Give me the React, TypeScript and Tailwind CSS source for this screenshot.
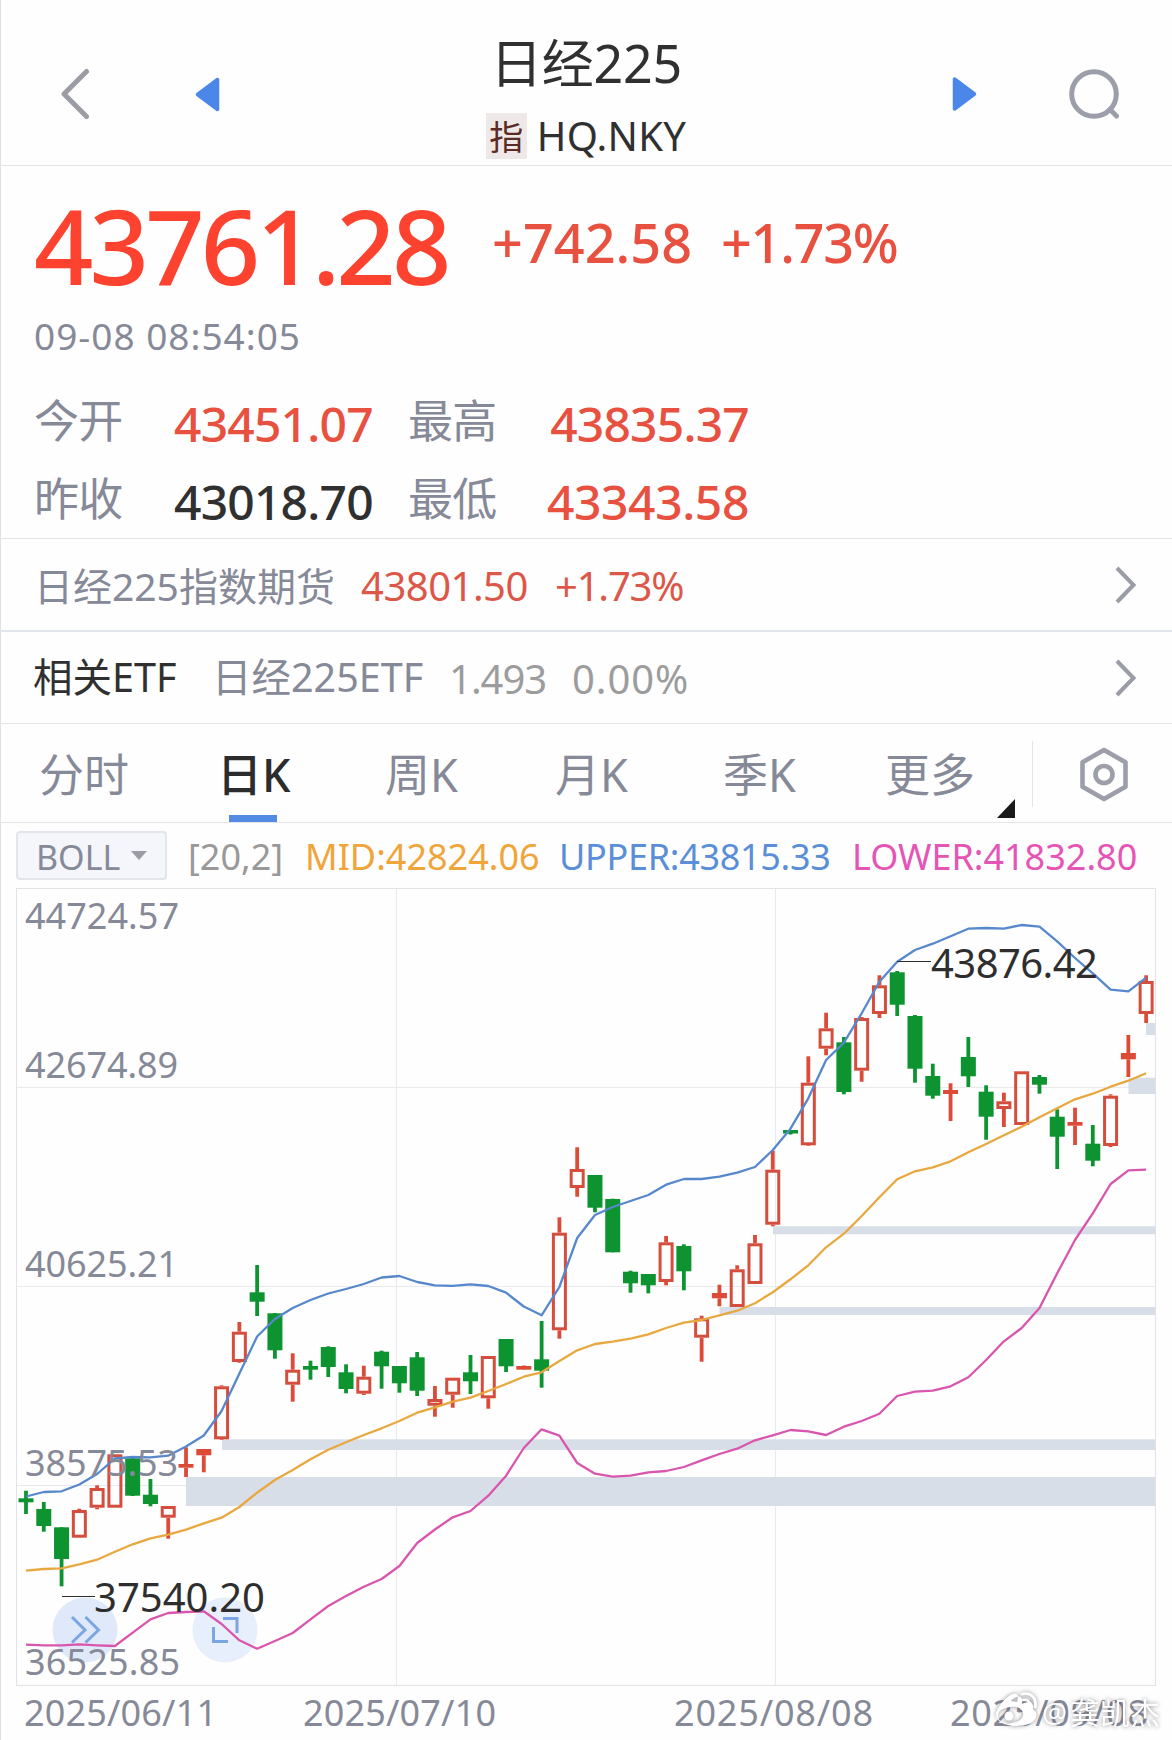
import clsx from "clsx";

type Candle = [high: number, top: number, bottom: number, low: number, up: 0 | 1];

const STEP = 17.78;
const FIRST_X = 26;
const TOP = 888;
const BOTTOM = 1685;

const candles: Candle[] = [
  [1490.7, 1498.3, 1502.3, 1514, 0],
  [1502, 1509, 1526, 1531.7, 0],
  [1527.3, 1527.3, 1559, 1586.3, 0],
  [1508.7, 1510, 1537.7, 1538, 1],
  [1485.3, 1488, 1507.7, 1509.3, 1],
  [1454.3, 1454.3, 1507.7, 1507.7, 1],
  [1457.3, 1458.3, 1495.7, 1496, 0],
  [1479, 1494.7, 1504, 1506.3, 0],
  [1506, 1506, 1517.7, 1538.7, 1],
  [1447.3, 1464, 1467.7, 1477, 1],
  [1449, 1449, 1455.3, 1472.3, 1],
  [1385.3, 1386.3, 1439.3, 1440, 1],
  [1322, 1331.7, 1362, 1362.7, 1],
  [1265, 1292.3, 1301.7, 1316, 0],
  [1313, 1313.3, 1350.3, 1358.7, 0],
  [1353.3, 1369.7, 1384.7, 1401.7, 1],
  [1360.7, 1366, 1369.7, 1379.7, 0],
  [1346.3, 1347, 1367, 1377, 0],
  [1364.3, 1372.3, 1389, 1393.3, 0],
  [1365.7, 1376.7, 1393.7, 1395, 1],
  [1350.7, 1351.7, 1366.3, 1388.7, 0],
  [1366, 1366, 1383.3, 1392.7, 0],
  [1352, 1357.3, 1390.7, 1396, 0],
  [1386, 1399, 1405.7, 1416.7, 1],
  [1377.7, 1377.7, 1394.7, 1407.7, 1],
  [1355, 1372.3, 1381.3, 1394, 0],
  [1356, 1356, 1398.3, 1408.7, 1],
  [1339, 1339, 1366.3, 1372, 0],
  [1365.5, 1366, 1369.7, 1370, 1],
  [1321, 1359.3, 1370.7, 1387.7, 0],
  [1217.3, 1232.7, 1330.3, 1338.7, 1],
  [1147.3, 1169, 1188, 1196.7, 1],
  [1175, 1175, 1207.7, 1212.3, 0],
  [1198.7, 1199, 1252.3, 1252.3, 0],
  [1270.7, 1271.7, 1283.3, 1292.7, 0],
  [1274, 1274, 1285.3, 1293.3, 0],
  [1236, 1242.3, 1282, 1285.3, 1],
  [1244.3, 1246, 1271.3, 1290.3, 0],
  [1315.7, 1318.3, 1337.7, 1361.7, 1],
  [1284.7, 1293, 1298.3, 1306.3, 1],
  [1265.3, 1269.3, 1307, 1307, 1],
  [1235, 1243.3, 1284, 1284, 1],
  [1150.7, 1169.7, 1224.7, 1226.3, 1],
  [1130, 1130, 1133.5, 1134.5, 0],
  [1056.3, 1082.7, 1145.3, 1146, 1],
  [1012.7, 1028.3, 1048.7, 1055.3, 1],
  [1037, 1042.3, 1092, 1094.3, 0],
  [1017, 1018, 1070.7, 1081.7, 1],
  [975.3, 985.3, 1014, 1018, 1],
  [971, 972.3, 1004.7, 1016, 0],
  [1015, 1016, 1068.7, 1082.7, 0],
  [1063.7, 1076, 1095.7, 1098.7, 0],
  [1083.3, 1090, 1094, 1121, 1],
  [1037, 1057, 1076.3, 1087, 0],
  [1085.3, 1091.7, 1116.7, 1139.7, 0],
  [1092.7, 1101.3, 1109, 1127, 1],
  [1071.3, 1071.3, 1125, 1125, 1],
  [1075, 1077, 1084.7, 1093.7, 0],
  [1109.3, 1116.7, 1136.7, 1169, 0],
  [1107.7, 1122, 1125.7, 1145, 1],
  [1125, 1143.7, 1160.7, 1166.3, 0],
  [1094.3, 1095.7, 1146, 1147, 1],
  [1035, 1053, 1059.3, 1077, 1],
  [975.3, 981, 1014, 1023, 1],
];

const upper = [
  1496.5, 1492, 1491.3, 1484.5, 1474, 1458.5, 1457, 1457.3, 1455.7, 1446.5, 1435.5, 1411, 1373.5,
  1336.5, 1319, 1308, 1300, 1293.5, 1289, 1284, 1277.5, 1276, 1282, 1285.3, 1285.8, 1284.3, 1286,
  1292.7, 1306.5, 1315.3, 1287, 1238, 1215, 1207, 1201, 1195, 1184.7, 1179, 1179, 1176.7, 1172.7,
  1167, 1150, 1128.7, 1098.3, 1060, 1042.7, 1013.3, 981.7, 961.7, 950, 943.7, 936.3, 928.7, 928,
  928.7, 925, 926.7, 941.3, 958, 973.3, 989.7, 991.3, 977.7,
];

const mid = [
  1570.7, 1569, 1568.3, 1564.3, 1559.7, 1551.7, 1544.3, 1538.3, 1534.7, 1529.7, 1523.3, 1517.7,
  1507, 1492.7, 1480, 1470, 1459.3, 1449.7, 1442.3, 1435, 1428.3, 1421, 1412.7, 1407.3, 1401.7,
  1397.7, 1391, 1384, 1376.7, 1372.3, 1361, 1350.3, 1344, 1341.7, 1338.7, 1334.3, 1328, 1322.7,
  1320, 1315.3, 1310.7, 1303.3, 1292.3, 1279.3, 1265.3, 1247.3, 1233.7, 1216, 1197.3, 1179.3,
  1171.3, 1167.3, 1161.3, 1152.3, 1144, 1135.3, 1126.7, 1117.3, 1108.3, 1099.3, 1093.7, 1086.7,
  1080.7, 1073.3,
];

const lower = [
  1644.7, 1645.3, 1645.3, 1644.3, 1645.3, 1646, 1632.7, 1619.3, 1613, 1612, 1611.3, 1624, 1640.3,
  1648.7, 1641, 1633, 1619.3, 1606, 1596, 1586.7, 1579, 1566, 1543, 1529.5, 1517.3, 1511, 1495.7,
  1475.7, 1448, 1429.3, 1435.7, 1463, 1473.7, 1476.7, 1475.7, 1472.3, 1471, 1467, 1460.3, 1454,
  1448.7, 1440.3, 1435.3, 1430, 1431.3, 1435, 1426.7, 1421, 1413.7, 1396, 1391.7, 1390.7, 1386.3,
  1377.3, 1360, 1341.3, 1328, 1308, 1273.3, 1240, 1213.3, 1184, 1170.3, 1169.7,
];

// unfilled gaps: x start, top, bottom
const gaps = [
  [186, 1477, 1506],
  [222, 1439.3, 1450],
  [719.5, 1307, 1315],
  [773, 1226.3, 1234.3],
  [1128.5, 1077.7, 1094],
  [1146, 1023, 1035],
];

const axisLabels = [
  { text: "44724.57", y: 929, w: 154 },
  { text: "42674.89", y: 1078, w: 153 },
  { text: "40625.21", y: 1277, w: 153 },
  { text: "38575.53", y: 1476, w: 153 },
  { text: "36525.85", y: 1675, w: 155 },
];

const dates = [
  { text: "2025/06/11", x: 24, w: 193 },
  { text: "2025/07/10", x: 303, w: 193 },
  { text: "2025/08/08", x: 674, w: 199 },
  { text: "2025/09/08", x: 950, w: 198 },
];

const tabs = [
  { label: "分时", pos: "ml-[39px] w-[91px]" },
  { label: "日K", pos: "ml-[87px] w-[76px]" },
  { label: "周K", pos: "ml-[92px] w-[77px]" },
  { label: "月K", pos: "ml-[93px] w-[77px]" },
  { label: "季K", pos: "ml-[91px] w-[77px]" },
  { label: "更多", pos: "ml-[85px] w-[91px]" },
];

const cx = (i: number) => FIRST_X + i * STEP;
const points = (ys: number[]) => ys.map((y, i) => `${cx(i).toFixed(1)},${y}`).join(" ");

function Chevron() {
  return (
    <svg className="ml-auto mr-[34px]" width="24" height="38" viewBox="0 0 24 38" fill="none">
      <path d="M3 2 19.500 19 3 36" stroke="#9a9ca6" strokeWidth="4" />
    </svg>
  );
}

function Header() {
  return (
    <header className="flex h-[166px] items-center border-b border-[#e4e5e8]">
      <svg className="ml-[60px] mt-[22px]" width="30" height="52" viewBox="0 0 30 52" fill="none">
        <path d="M26.500 3.500 4 26 26.500 48.500" stroke="#9b9ca4" strokeWidth="5" strokeLinecap="round" strokeLinejoin="round" />
      </svg>
      <svg className="ml-[105px] mt-[22px]" width="26" height="36" viewBox="0 0 26 36">
        <path d="M2.500 18.500 22.500 3.500V33.500Z" fill="#4a87e8" stroke="#4a87e8" strokeWidth="3.500" strokeLinejoin="round" />
      </svg>
      <div className="flex h-full flex-1 flex-col items-center">
        <h1 className="mt-[35px] text-[52px] leading-[56px] tracking-[-0.3px] text-[#303030]">日经225</h1>
        <div className="mt-[22px] flex h-[46px] items-center gap-[10px]">
          <span className="flex h-[46px] w-[41px] items-center justify-center bg-[#eee9e8] pt-[2px] text-[34px] leading-none text-[#5b2b25]">
            指
          </span>
          <span className="text-[40px] leading-none tracking-[0.3px] text-[#303030]">HQ.NKY</span>
        </div>
      </div>
      <svg className="mt-[22px]" width="26" height="36" viewBox="0 0 26 36">
        <path d="M23.500 18 3.500 3V33Z" fill="#4a87e8" stroke="#4a87e8" strokeWidth="3.500" strokeLinejoin="round" />
      </svg>
      <svg className="ml-[91px] mr-[52px] mt-[22px]" width="52" height="52" viewBox="0 0 52 52" fill="none" stroke="#9c9eaa" strokeWidth="5">
        <circle cx="26" cy="26" r="22.300" />
        <path d="m42 41.500 6.500 6.500" strokeLinecap="round" />
      </svg>
    </header>
  );
}

function Quote() {
  return (
    <section className="h-[373px] border-b border-[#e4e5e8] pl-[34px]">
      <div className="flex h-[142px] pt-[27px] font-medium">
        <span className="w-[458px] text-[104px] leading-[104px] tracking-[-3.900px] text-[#fd4330]">43761.28</span>
        <span className="w-[229px] pt-[22px] text-[54px] leading-[54px] text-[#e8503f]">+742.58</span>
        <span className="pt-[22px] text-[54px] leading-[54px] tracking-[-1.300px] text-[#e8503f]">+1.73%</span>
      </div>
      <div className="mt-[8px] text-[37px] leading-[40px] tracking-[1px] text-[#868997]">09-08 08:54:05</div>
      <div className="mt-[26px] grid w-[715px] grid-cols-[140px_234px_100px_1fr] text-[48px] leading-[78px] tracking-[-0.8px] text-[#e8503f]">
        <span className="text-[45px] text-[#868997]">今开</span>
        <span className="pt-[3px] font-medium">43451.07</span>
        <span className="text-[45px] text-[#868997]">最高</span>
        <span className="pt-[3px] text-right font-medium">43835.37</span>
        <span className="-mt-[3px] text-[45px] text-[#868997]">昨收</span>
        <span className="font-medium text-[#303030]">43018.70</span>
        <span className="-mt-[3px] text-[45px] text-[#868997]">最低</span>
        <span className="text-right font-medium tracking-[-0.4px]">43343.58</span>
      </div>
    </section>
  );
}

function Tabs() {
  return (
    <nav className="flex h-[99px] items-stretch border-b border-[#e4e5e8]">
      {tabs.map((t) => {
        const active = t.label === "日K";
        return (
          <div
            key={t.label}
            className={clsx(
              "relative flex items-center whitespace-nowrap pt-[3px] text-[45px] leading-none",
              t.pos,
              active ? "font-medium text-[#2c2c2c]" : "text-[#868997]"
            )}
          >
            {t.label}
            {active && <span className="absolute bottom-0 left-[12px] h-[7px] w-[48px] bg-[#548be2]" />}
          </div>
        );
      })}
      <svg className="mb-[4px] ml-[21px] self-end" width="18" height="19" viewBox="0 0 18 19">
        <path d="M18 0V19H0Z" fill="#1a1a1a" />
      </svg>
      <div className="ml-[17px] mt-[17px] h-[66px] w-px bg-[#e4e5e8]" />
      <svg className="ml-[45px] mt-[22px]" width="52" height="58" viewBox="0 0 52 58" fill="none" stroke="#9c9eaa" strokeWidth="4.600">
        <path d="M26 4 47.500 16.300V40.700L26 53 4.500 40.700V16.300Z" strokeLinejoin="round" />
        <circle cx="26" cy="28.500" r="8.500" />
      </svg>
    </nav>
  );
}

function Indicators() {
  return (
    <div className="flex h-[65px] items-center whitespace-nowrap pl-[16px] text-[36px] leading-none">
      <div className="flex h-[49px] w-[151px] items-center rounded-[4px] border-2 border-[#e2e5ec] bg-[#f4f6fb] pl-[18px] pt-[2px] text-[34px] text-[#868997]">
        BOLL
        <svg className="mb-[2px] ml-[11px]" width="16" height="9" viewBox="0 0 16 9">
          <path d="M0 0H16L8 9Z" fill="#9a9ca6" />
        </svg>
      </div>
      <span className="ml-[21px] w-[117px] pt-[2px] text-[#999]">[20,2]</span>
      <span className="w-[254px] pt-[2px] text-[#efa53a]">MID:42824.06</span>
      <span className="w-[293px] pt-[2px] tracking-[-0.300px] text-[#5a8fd8]">UPPER:43815.33</span>
      <span className="pt-[2px] text-[#e455b6]">LOWER:41832.80</span>
    </div>
  );
}

function Chart() {
  return (
    <svg width="1172" height="852" viewBox={`0 ${TOP} 1172 852`} className="block shrink-0">
      <g stroke="#e8eaee" strokeWidth="1.100" fill="none">
        <path d="M16 1087.500H1155M16 1286.500H1155M16 1485.500H1155M396.500 888V1685M775.500 888V1685" />
        <rect x="16.500" y={TOP + 0.5} width="1139" height={BOTTOM - TOP} stroke="#e2e3e7" />
      </g>

      {gaps.map(([x, y1, y2]) => (
        <rect key={x} x={x} y={y1} width={1155 - x} height={y2 - y1} fill="#d8dee7" />
      ))}

      {/* floating buttons */}
      <g fill="none" stroke="#7ba6e2" strokeWidth="3">
        <circle cx="85" cy="1630" r="32.500" fill="#dfe9f9" stroke="none" />
        <path d="M72 1617 85 1630 72 1642.500M85.500 1617 98.500 1630 85.500 1642.500" />
        <circle cx="225" cy="1630" r="32.500" fill="#e8effc" stroke="none" />
        <path d="M223 1618.500H237V1633M213.500 1627V1641.500H228" />
      </g>

      {candles.map(([high, top, bottom, low, up], i) => {
        const x = cx(i);
        if (!up) {
          return (
            <g key={i} fill="#0d9430">
              <rect x={x - 1.9} y={high} width="3.800" height={low - high} />
              <rect x={x - 7.5} y={top} width="15" height={bottom - top} />
            </g>
          );
        }
        const h = bottom - top;
        return (
          <g key={i} fill="#dc4a38">
            <rect x={x - 1.9} y={high} width="3.800" height={top - high} />
            <rect x={x - 1.9} y={bottom} width="3.800" height={low - bottom} />
            {h > 6.5 ? (
              <rect x={x - 6} y={top + 1.5} width="12" height={h - 3} fill="none" stroke="#d54d3d" strokeWidth="3" />
            ) : (
              <rect x={x - 7.5} y={top} width="15" height={h} />
            )}
          </g>
        );
      })}

      <g fill="none" strokeWidth="2.300" strokeLinejoin="round">
        <polyline points={points(upper)} stroke="#5788cb" />
        <polyline points={points(mid)} stroke="#e8a840" />
        <polyline points={points(lower)} stroke="#d856ad" />
      </g>

      <g fill="#868997" fontSize="36">
        {axisLabels.map((l) => (
          <text key={l.text} x="25" y={l.y} textLength={l.w}>
            {l.text}
          </text>
        ))}
        {dates.map((d) => (
          <text key={d.text} x={d.x} y="1725.500" textLength={d.w}>
            {d.text}
          </text>
        ))}
      </g>

      <g fill="#2e2e2e" fontSize="40">
        <path d="M897 961.500H931M62 1596.500H95" stroke="#2e2e2e" strokeWidth="1.200" />
        <text x="931" y="977.500" textLength="167">
          43876.42
        </text>
        <text x="94" y="1612" textLength="171">
          37540.20
        </text>
      </g>

      {/* author tag */}
      <g fill="#fff" className="drop-shadow-[0_0_2px_rgba(90,90,100,0.7)]">
        <text x="1042" y="1723" fontSize="28">
          @
        </text>
        <text x="1070" y="1724" fontSize="30" textLength="90">
          龚凯杰
        </text>
        <path
          fillRule="evenodd"
          d="M1011 1701c4-5 10-6 11-2 1 3-1 5 0 5 6-3 12-2 11 4 0 2 2 3 3 4 3 10-9 14-20 14-12 0-20-5-20-12 0-5 7-14 13-18 5-4 10-3 9 2l-1 4zm-1 6c-8 1-13 5-12 10s7 7 14 6 12-5 11-10-6-7-13-6z"
        />
        <circle cx="1009" cy="1716" r="4.500" />
        <path d="M1023 1700c5-1 8 2 7 7M1022 1694c9-2 15 4 13 13" fill="none" stroke="#fff" strokeWidth="2.800" strokeLinecap="round" />
      </g>
    </svg>
  );
}

export default function App() {
  return (
    <div className="flex h-[1740px] w-[1172px] flex-col overflow-hidden bg-[#fefefe] font-['Noto_Sans','Noto_Sans_CJK_SC',sans-serif] shadow-[inset_1px_0_0_#dfe0e2]">
      <Header />
      <Quote />
      <div className="flex h-[93px] items-center border-b-2 border-[#e2e5ec] pl-[34px] text-[40px] leading-none">
        <span className="w-[327px] pt-[1px] text-[39px] text-[#868997]">日经225指数期货</span>
        <span className="w-[194px] pt-[2px] tracking-[-0.5px] text-[#dd5748]">43801.50</span>
        <span className="pt-[2px] tracking-[-1.200px] text-[#dd5748]">+1.73%</span>
        <Chevron />
      </div>
      <div className="flex h-[92px] items-center border-b border-[#e4e5e8] pl-[33px] text-[40px] leading-none">
        <span className="w-[179px] text-[39.500px] text-[#303030]">相关ETF</span>
        <span className="w-[237px] text-[39.500px] text-[#868997]">日经225ETF</span>
        <span className="w-[123px] pt-[2px] tracking-[-1px] text-[#9c9c9c]">1.493</span>
        <span className="pt-[2px] tracking-[0.9px] text-[#9c9c9c]">0.00%</span>
        <Chevron />
      </div>
      <Tabs />
      <Indicators />
      <Chart />
    </div>
  );
}
